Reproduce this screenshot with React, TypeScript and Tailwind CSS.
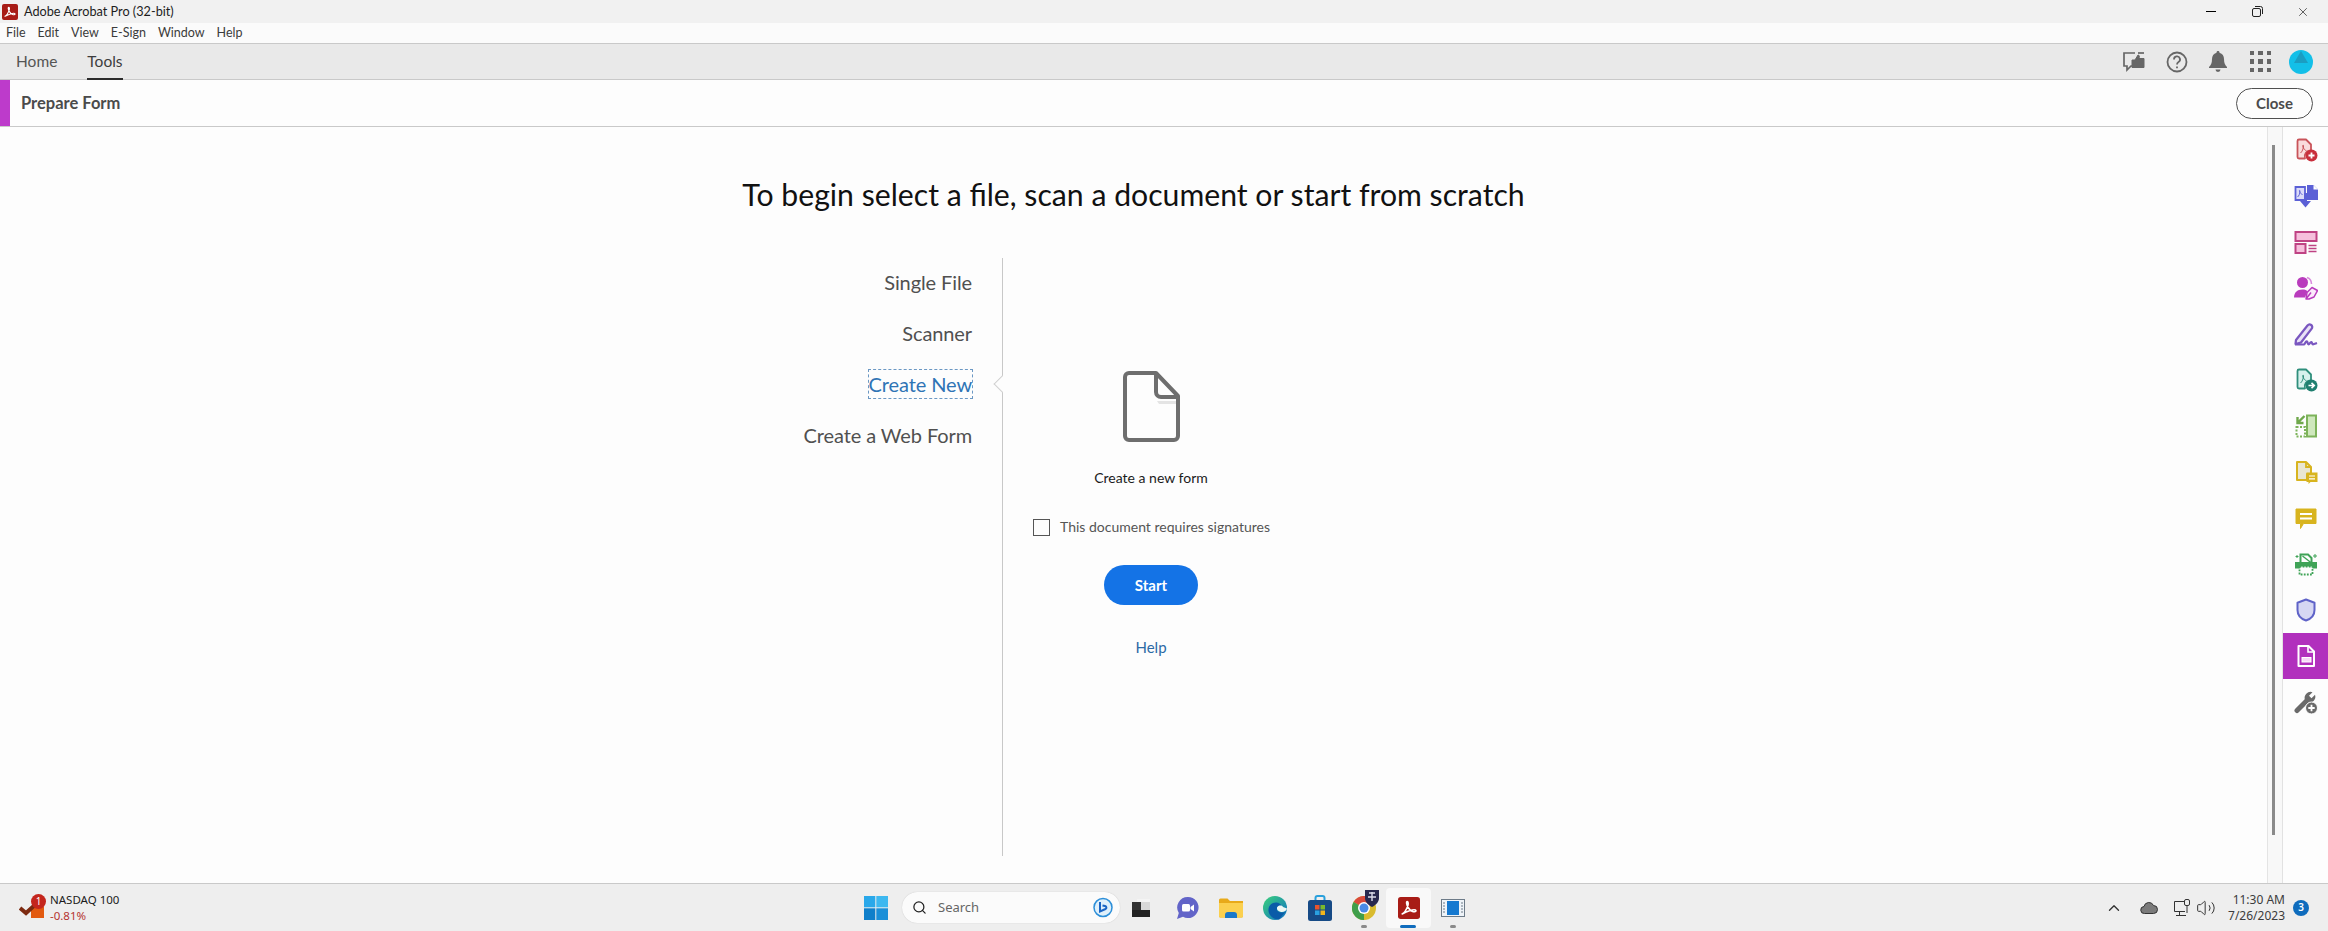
import { ChevronUp, Search, Volume2, X } from "lucide-react";
import type { ReactNode } from "react";

function AcrobatGlyph({ size = 16, radius = 3 }: { size?: number; radius?: number }) {
  return (
    <svg width={size} height={size} viewBox="0 0 24 24">
      <rect width="24" height="24" rx={radius} fill="#a81c16" />
      <path
        d="M4.500 18.500c2.500-1.200 5-5.500 6.400-9.600.5-1.600.3-4-.8-4-1.200 0-1 3.200 1 6.500 1.500 2.500 3.500 4.500 5.500 4.700 1.800.2 3.300-.4 3-1.300-.4-1-3.600-.9-7 .1-3.200.9-6.500 2.700-8.100 3.600z"
        fill="none"
        stroke="#fff"
        strokeWidth="1.700"
        strokeLinejoin="round"
      />
    </svg>
  );
}

function MiniPdf({ color, fill }: { color: string; fill: string }) {
  return (
    <>
      <path d="M5 1.500h7l5 5v6a6 6 0 0 0-6 8H5A1.500 1.500 0 0 1 3.500 19V3A1.500 1.500 0 0 1 5 1.500z" fill={fill} stroke={color} strokeWidth="1.800" strokeLinejoin="round" />
      <path d="M6.500 15c1.500-1 3-4.500 3-7 0-1.500-1.200-1-.6.800.6 1.800 2 3.500 3.600 4" fill="none" stroke={color} strokeWidth="1" />
    </>
  );
}

const railIcons: { key: string; active?: boolean; svg: ReactNode }[] = [
  {
    key: "create",
    svg: (
      <>
        <MiniPdf color="#c9545a" fill="#f9dcdc" />
        <circle cx="17.500" cy="17.500" r="6" fill="#c92f3c" />
        <path d="M17.500 14.500v6M14.500 17.500h6" stroke="#fff" strokeWidth="1.800" />
      </>
    ),
  },
  {
    key: "combine",
    svg: (
      <>
        <path d="M1.500 3h9.500v13H1.500z" fill="#dcdcf8" stroke="#5b60d6" strokeWidth="1.800" />
        <path d="M13 1h6.500L24 5.500V16H13z" fill="#5b60d6" />
        <path d="M19.500 1v4.500H24z" fill="#fdfdfd" />
        <path d="M3.500 13c1.500-1 2.500-3.500 2.500-6 0-1-1-.8-.5.500s1.500 2.500 3 3" fill="none" stroke="#5b60d6" strokeWidth="1" />
        <path d="M11.500 9v9" stroke="#5b60d6" strokeWidth="3" />
        <path d="M6 17h11l-5.500 6.500z" fill="#5b60d6" />
      </>
    ),
  },
  {
    key: "organize",
    svg: (
      <>
        <rect x="1.500" y="2" width="21" height="9" fill="#f6bfdc" stroke="#bf4384" strokeWidth="2" />
        <rect x="1.500" y="14" width="10" height="9" fill="#f6bfdc" stroke="#bf4384" strokeWidth="2" />
        <path d="M14.500 15.500h8M14.500 18.500h8M14.500 21.500h8" stroke="#bf4384" strokeWidth="1.400" />
      </>
    ),
  },
  {
    key: "sign-request",
    svg: (
      <>
        <circle cx="8.500" cy="6.500" r="5.500" fill="#b93cbd" />
        <path d="M0 21.500c0-5 3-8 8.500-8 2.500 0 4 .7 5 1.700L11 21.500z" fill="#b93cbd" />
        <path d="M13 1.500c3 1 4.500 3 4.500 6.500" fill="none" stroke="#d98adc" strokeWidth="1.600" />
        <path d="M12 23l1-6.500 5-5 5.500 3-3.500 6.500-5 2zM12 23l5-6.500" fill="#fbeafb" stroke="#b93cbd" strokeWidth="1.500" strokeLinejoin="round" />
      </>
    ),
  },
  {
    key: "fill-sign",
    svg: (
      <>
        <path d="M2 18L13.500 3.500c1-1.200 2.500-1.400 3.700-.5s1.400 2.500.5 3.700L7 20.500l-5.500 1.500z" fill="#e9e1f7" stroke="#7a57c0" strokeWidth="2.200" strokeLinejoin="round" />
        <path d="M1 22.500h9c1-.2 1.500-3.500 2.800-3.200 1.200.3.500 3 1.800 3 1.200 0 1.500-2.500 2.700-2.300 1 .2.500 2.300 1.700 2.300 1.500 0 2.500-.8 4-1.300" fill="none" stroke="#7a57c0" strokeWidth="2.200" />
      </>
    ),
  },
  {
    key: "export",
    svg: (
      <>
        <MiniPdf color="#2f8f7c" fill="#d6f1ec" />
        <circle cx="17.500" cy="17.500" r="6" fill="#1f7f6f" />
        <path d="M14.500 17.500h5.500M17.500 14.800l2.800 2.700-2.800 2.700" stroke="#fff" strokeWidth="1.600" fill="none" />
      </>
    ),
  },
  {
    key: "compress",
    svg: (
      <>
        <rect x="13" y="1.500" width="9" height="21" fill="#cfe8bd" stroke="#7db35a" strokeWidth="2" />
        <rect x="2.500" y="13" width="8.500" height="9.500" fill="none" stroke="#7db35a" strokeWidth="2" strokeDasharray="2 1.500" />
        <path d="M10.500 2L4.500 8M3.500 3v6h6" fill="none" stroke="#6fa84c" strokeWidth="2.400" />
      </>
    ),
  },
  {
    key: "edit-comment",
    svg: (
      <>
        <path d="M3 2h9l5 5v7h-4v6H3z" fill="#e9e6d2" stroke="#d8b41f" strokeWidth="2" strokeLinejoin="round" />
        <path d="M12 2v5h5" fill="none" stroke="#d8b41f" strokeWidth="1.800" />
        <path d="M12.500 12.500h11v9.500h-7l-2 2v-2h-2z" fill="#d8b41f" />
        <path d="M15 16h6M15 18.800h6" stroke="#fff" strokeWidth="1.200" />
      </>
    ),
  },
  {
    key: "comment",
    svg: (
      <>
        <path d="M2 3h20v14.500H9.500L6.500 22.500v-5H2z" fill="#d8b41f" stroke="#d8b41f" strokeWidth="1" strokeLinejoin="round" />
        <path d="M6 8h12M6 12.500h12" stroke="#fff" strokeWidth="2" />
      </>
    ),
  },
  {
    key: "scan",
    svg: (
      <>
        <path d="M6.500 11V2.500H14L17.500 6v5" fill="#fdfdfd" stroke="#3fa357" strokeWidth="2" />
        <path d="M8.500 4l9 7" stroke="#3fa357" strokeWidth="1.400" />
        <path d="M1 10h22v6.500H1z" fill="#3fa357" />
        <rect x="5.500" y="14.500" width="13" height="8" fill="#fdfdfd" stroke="#3fa357" strokeWidth="1.800" strokeDasharray="1.800 1.300" />
        <path d="M21 2v4M19 4h4M3 3v3M1.500 4.500h3" stroke="#3fa357" strokeWidth="1" />
      </>
    ),
  },
  {
    key: "protect",
    svg: (
      <path d="M12 1.500l8.500 3.200V12c0 5.500-3.300 8.800-8.500 10.500C6.800 20.800 3.500 17.500 3.500 12V4.700z" fill="#d6d7f3" stroke="#5f63c8" strokeWidth="2" strokeLinejoin="round" />
    ),
  },
  {
    key: "form",
    active: true,
    svg: (
      <>
        <path d="M4.500 2h10L20 7.500V22H4.500z" fill="none" stroke="#fff" strokeWidth="2" strokeLinejoin="round" />
        <path d="M14 2.500V8h5.500" fill="none" stroke="#fff" strokeWidth="1.600" />
        <rect x="8" y="13.500" width="9" height="4.500" fill="#f7d9f8" stroke="#fff" strokeWidth="1" />
      </>
    ),
  },
  {
    key: "more",
    svg: (
      <>
        <path d="M3 20.500L13 10.500" stroke="#6a6a6a" strokeWidth="5" strokeLinecap="round" />
        <path d="M11 10a6 6 0 0 1 7.500-7.800l-3.500 3.500 2.500 2.500 3.500-3.500A6 6 0 0 1 14 12.500z" fill="#6a6a6a" />
        <circle cx="17.500" cy="18" r="6" fill="#6a6a6a" stroke="#fdfdfd" strokeWidth="1" />
        <path d="M17.500 14.800v6.400M14.300 18h6.400" stroke="#fff" strokeWidth="1.800" />
      </>
    ),
  },
];

function Rail() {
  return (
    <aside className="flex w-[46px] flex-col border-l border-[#e2e2e2]">
      {railIcons.map((icon) => (
        <div
          key={icon.key}
          className={icon.active ? "flex h-[46px] items-center justify-center bg-[#b130bd]" : "flex h-[46px] items-center justify-center"}
        >
          <svg width="24" height="24" viewBox="0 0 24 24">
            {icon.svg}
          </svg>
        </div>
      ))}
    </aside>
  );
}

function TopBar() {
  return (
    <>
      <div className="flex h-[23px] items-center bg-[#f1f1f1] pl-[2px] text-[12.700px] text-[#1d1d1d]">
        <AcrobatGlyph />
        <span className="ml-[6px]">Adobe Acrobat Pro (32-bit)</span>
        <div className="ml-auto flex h-full items-center pr-[2px]">
          <div className="flex w-[46px] justify-center">
            <span className="h-px w-[10px] bg-black" />
          </div>
          <div className="flex w-[46px] justify-center">
            <svg width="11" height="11" viewBox="0 0 11 11" fill="none" stroke="#222">
              <rect x=".5" y="2.500" width="8" height="8" rx="1.500" />
              <path d="M3 .5h5.500a2 2 0 0 1 2 2V8" />
            </svg>
          </div>
          <div className="flex w-[46px] justify-center">
            <X size={14} strokeWidth={1.200} color="#222" />
          </div>
        </div>
      </div>
      <div className="flex h-[21px] items-center gap-[12px] border-b border-[#c9c9c9] bg-[#fbfbfb] pl-[6px] text-[12.500px] text-[#3c3c3c]">
        <span>File</span>
        <span>Edit</span>
        <span>View</span>
        <span>E-Sign</span>
        <span>Window</span>
        <span>Help</span>
      </div>
      <div className="flex h-[36px] items-center border-b border-[#c9c9c9] bg-[#e9e9e9] pl-[16px] text-[#555]">
        <span className="text-[15.500px]">Home</span>
        <span className="relative ml-[30px] text-[15.500px] text-[#3c3c3c]">
          Tools
          <span className="absolute -bottom-[7px] left-0 h-[2px] w-full bg-[#2c2c2c]" />
        </span>
        <div className="ml-auto flex items-center pr-[15px]">
          <svg width="24" height="22" viewBox="0 0 24 22" fill="none" stroke="#666" strokeWidth="1.700">
            <path d="M13 2H2v13h3v4l4-4h3" />
            <path d="M10 9h3l3-5c1.500 0 1.500 1.500 1 3.500h5v9H10z" fill="#666" stroke="#666" strokeWidth="1" />
            <path d="M16 2h6" />
          </svg>
          <svg className="ml-[20px]" width="22" height="22" viewBox="0 0 22 22" fill="none" stroke="#666" strokeWidth="1.800">
            <circle cx="11" cy="11" r="9.500" />
            <path d="M8 8.500a3 3 0 1 1 4.500 2.500c-1 .6-1.500 1.200-1.500 2.500" />
            <path d="M11 15.500v1.800" />
          </svg>
          <svg className="ml-[21px]" width="18" height="21" viewBox="0 0 18 21" fill="#666">
            <path d="M9 0c1 0 1.500.7 1.500 1.700C13.500 2.500 15 5 15 8c0 4 1 6 3 8v1H0v-1c2-2 3-4 3-8 0-3 1.500-5.500 4.500-6.300C7.500.7 8 0 9 0z" />
            <path d="M6.500 18.500h5a2.500 2.500 0 0 1-5 0z" />
          </svg>
          <div className="ml-[23px] grid grid-cols-3 gap-[4px]">
            {Array.from({ length: 9 }).map((_, i) => (
              <span key={i} className="size-[4.500px] bg-[#666]" />
            ))}
          </div>
          <div className="relative ml-[18px] size-[24px] overflow-hidden rounded-full bg-[#13bfe8]">
            <span className="absolute left-[5px] top-[1px] size-0 border-x-[7px] border-b-[12px] border-x-transparent border-b-[#1b9dc2]" />
          </div>
        </div>
      </div>
      <div className="flex h-[47px] items-center border-b border-[#c9c9c9] bg-[#fdfdfd]">
        <span className="h-full w-[10px] bg-[#bd3bcb]" />
        <span className="ml-[11px] text-[16.500px] font-bold text-[#4b4b4b]">Prepare Form</span>
        <button className="ml-auto mr-[15px] h-[31px] w-[77px] rounded-full border border-[#505050] text-[15px] font-bold text-[#4b4b4b]">
          Close
        </button>
      </div>
    </>
  );
}

function NewForm() {
  return (
    <div className="flex w-[296px] flex-col items-center pt-[113px]">
      <svg width="57" height="71" viewBox="0 0 57 71" fill="none" stroke="#6e6e6e" strokeWidth="4">
        <path d="M34 30h20v3H36z" fill="#e4e4e4" stroke="none" />
        <path d="M6 2h27l22 23v40a4 4 0 0 1-4 4H6a4 4 0 0 1-4-4V6a4 4 0 0 1 4-4z" strokeLinejoin="round" />
        <path d="M33 2v19a5 5 0 0 0 5 5h17" />
      </svg>
      <div className="mt-[26px] text-[14px] leading-[20px] text-[#1b1b1b]">Create a new form</div>
      <label className="mt-[29px] flex items-center self-start pl-[30px] text-[14px] leading-[20px] text-[#555]">
        <span className="size-[17px] border border-[#555]" />
        <span className="ml-[10px]">This document requires signatures</span>
      </label>
      <button className="mt-[28px] h-[40px] w-[94px] rounded-full bg-[#1473e6] text-[15px] font-bold text-white">Start</button>
      <a className="mt-[32px] text-[15px] leading-[20px] text-[#2c6aa5]">Help</a>
    </div>
  );
}

function Body() {
  return (
    <section className="flex min-w-0 flex-1 flex-col">
      <h1 className="mt-[47px] text-center text-[30.200px] leading-[40px] text-[#111]">
        To begin select a file, scan a document or start from scratch
      </h1>
      <div className="mt-[44px] flex h-[598px]">
        <nav className="ml-[700px] flex w-[272px] flex-col items-end pt-[10px] text-[20px] leading-[28px] tracking-[-0.1px] text-[#505050]">
          <span>Single File</span>
          <span className="mt-[23px]">Scanner</span>
          <span className="mt-[23px] text-[#2f74b5] outline-1 outline-dashed outline-[#6b98c4]">Create New</span>
          <span className="mt-[23px]">Create a Web Form</span>
        </nav>
        <div className="relative ml-[30px] w-px bg-[#c8c8c8]">
          <span className="absolute left-[-6px] top-[120px] size-[12px] rotate-45 border-b border-l border-[#d0d0d0] bg-[#fdfdfd]" />
        </div>
        <NewForm />
      </div>
    </section>
  );
}

function TaskIcon({ children, active, dot }: { children: ReactNode; active?: boolean; dot?: boolean }) {
  return (
    <div className={active ? "relative flex h-[40px] w-[44.400px] items-center justify-center rounded-[4px] bg-[#f9f9f9]" : "relative flex h-[40px] w-[44.400px] items-center justify-center"}>
      {children}
      {active && <span className="absolute bottom-0 left-[14px] h-[3px] w-[16px] rounded-full bg-[#0f6cbd]" />}
      {dot && <span className="absolute bottom-0 left-[19px] h-[3px] w-[6px] rounded-full bg-[#8a8a8a]" />}
    </div>
  );
}

function Taskbar() {
  return (
    <footer className="relative flex h-[48px] items-center justify-between border-t border-[#c9c9c9] bg-[#eeeeee] font-['Noto_Sans',sans-serif]">
      <div className="flex items-center pl-[19px]">
        <div className="relative h-[24px] w-[30px]">
          <svg width="30" height="24" viewBox="0 0 30 24">
            <rect x="12" y="11" width="13" height="11" fill="#e25a10" />
            <path d="M1 12l6 5 10-9" fill="none" stroke="#7c2a10" strokeWidth="4" />
          </svg>
          <span className="absolute left-[12px] top-[-2px] flex size-[15px] items-center justify-center rounded-full bg-[#c4261d] text-[10px] text-white">1</span>
        </div>
        <div className="ml-[1px] flex flex-col text-[11.500px] leading-[16px]">
          <span className="text-[#1c1c1c]">NASDAQ 100</span>
          <span className="text-[#b5332e]">-0.81%</span>
        </div>
      </div>

      <div className="absolute left-[864px] flex items-center">
        <svg width="24" height="24" viewBox="0 0 24 24">
          <rect width="11.300" height="11.300" fill="#29a8ea" />
          <rect x="12.300" width="11.700" height="11.300" fill="#3db8f0" />
          <rect y="12.300" width="11.300" height="11.700" fill="#0f7fca" />
          <rect x="12.300" y="12.300" width="11.700" height="11.700" fill="#1a8fd8" />
        </svg>
        <div className="ml-[14px] flex h-[31px] w-[218px] items-center rounded-full bg-[#fbfbfb] pl-[10px] pr-[6px] text-[13px] text-[#666] shadow-[0_0_1px_#bbb]">
          <Search size={15} strokeWidth={2} color="#222" />
          <span className="ml-[11px]">Search</span>
          <svg className="ml-auto" width="22" height="22" viewBox="0 0 22 22">
            <circle cx="11" cy="10.500" r="9" fill="#dff0fb" stroke="#2c8fd9" strokeWidth="1.500" />
            <path d="M8 5v9.500l5.500-2.500c1.500-.8 1-2.500-.5-3L10.500 8.500" fill="none" stroke="#1a64c4" strokeWidth="2" />
          </svg>
        </div>
        <div className="flex items-center">
          <TaskIcon>
            <svg width="20" height="18" viewBox="0 0 20 18">
              <rect x="5" y="0" width="13" height="11" fill="#f4f4f4" />
              <rect x="0" y="3" width="18" height="15" fill="#d8d8d8" />
              <rect x="0" y="11" width="18" height="7" fill="#222" />
              <rect x="0" y="3" width="9" height="8" fill="#333" />
            </svg>
          </TaskIcon>
          <TaskIcon>
            <svg width="24" height="24" viewBox="0 0 24 24">
              <path d="M13 1a10.500 10.500 0 1 1-5 19.700L2 23l1.800-6A10.500 10.500 0 0 1 13 1z" fill="#6264c8" />
              <rect x="7" y="8" width="8" height="7.500" rx="1.500" fill="#fff" />
              <path d="M15.500 11l3.500-2.500v7L15.500 13z" fill="#fff" />
            </svg>
          </TaskIcon>
          <TaskIcon>
            <svg width="24" height="20" viewBox="0 0 24 20">
              <path d="M0 2a1.500 1.500 0 0 1 1.500-1.500h7L11 3h13v15a1.500 1.500 0 0 1-1.500 1.500h-21A1.500 1.500 0 0 1 0 18z" fill="#e8aa1a" />
              <path d="M0 5h24v13a1.500 1.500 0 0 1-1.500 1.500h-21A1.500 1.500 0 0 1 0 18z" fill="#fbd04f" />
              <path d="M6 20v-3a3 3 0 0 1 3-3h6a3 3 0 0 1 3 3v3z" fill="#1a78c9" />
            </svg>
          </TaskIcon>
          <TaskIcon>
            <svg width="24" height="24" viewBox="0 0 24 24">
              <defs>
                <linearGradient id="edgeFill" x1="0" y1="0" x2="1" y2="1">
                  <stop offset="0" stopColor="#3bd27a" />
                  <stop offset="1" stopColor="#0f6fc6" />
                </linearGradient>
              </defs>
              <circle cx="12" cy="12" r="12" fill="url(#edgeFill)" />
              <path d="M24 14c-1 2-4 3-6.500 2.500-2.500-.4-4-2-3.500-4s3.500-3 5-1.500C18 7 14 5.500 10 7c-4 1.800-5.500 6-4 10s6 6.500 10 6.500" fill="#0a5ba8" />
              <path d="M24 12.500c-.5 2.500-3.500 4-6 3.500-3-.6-4.500-2.500-4-4.500 1-3 6-2.500 6-.5" fill="#eef8f4" />
            </svg>
          </TaskIcon>
          <TaskIcon>
            <svg width="24" height="26" viewBox="0 0 24 26">
              <path d="M7.500 6V3a2 2 0 0 1 2-2h5a2 2 0 0 1 2 2v3" fill="none" stroke="#29a0dc" strokeWidth="2" />
              <rect y="5" width="24" height="21" rx="2.500" fill="#164a86" />
              <rect x="7" y="10" width="4.500" height="4.500" fill="#e8542c" />
              <rect x="12.500" y="10" width="4.500" height="4.500" fill="#7ab82b" />
              <rect x="7" y="15.500" width="4.500" height="4.500" fill="#2aa0e0" />
              <rect x="12.500" y="15.500" width="4.500" height="4.500" fill="#f2b51c" />
            </svg>
          </TaskIcon>
          <TaskIcon dot>
            <div className="relative">
              <svg width="24" height="24" viewBox="0 0 24 24">
                <circle cx="12" cy="12" r="12" fill="#d9bb2f" />
                <path d="M12 12L1.600 6A12 12 0 0 1 22.400 6z" fill="#d94a3b" />
                <path d="M12 12L1.600 6A12 12 0 0 0 12 24z" fill="#3f9e4a" />
                <circle cx="12" cy="12" r="6" fill="#fff" />
                <circle cx="12" cy="12" r="4.500" fill="#4a8ae6" />
              </svg>
              <svg className="absolute left-[12px] top-[-7px]" width="16" height="18" viewBox="0 0 16 18">
                <path d="M1 1h14v8c0 4-3 7-7 9-4-2-7-5-7-9z" fill="#28284e" />
                <path d="M5 4h6M8 3v9M4 8h8" stroke="#dcdcea" strokeWidth="1.400" />
              </svg>
            </div>
          </TaskIcon>
          <TaskIcon active>
            <AcrobatGlyph size={22} radius={3} />
          </TaskIcon>
          <TaskIcon dot>
            <svg width="24" height="18" viewBox="0 0 24 18">
              <rect x=".5" y=".5" width="23" height="17" fill="#eef3f8" stroke="#6d7b88" />
              <rect x="6" y="2" width="12" height="14" fill="#1579d0" />
              <path d="M2 4h2M2 7h2M2 10h2M2 13h2M20 4h2M20 7h2M20 10h2M20 13h2" stroke="#6d7b88" />
            </svg>
          </TaskIcon>
        </div>
      </div>

      <div className="flex items-center pr-[19px] text-[#3c3c3c]">
        <ChevronUp size={18} strokeWidth={1.800} color="#333" />
        <svg className="ml-[17px]" width="18" height="14" viewBox="0 0 18 14">
          <path d="M4.500 12.500a3.500 3.500 0 0 1-.5-7 5 5 0 0 1 9.500-1 4 4 0 0 1 0 8z" fill="#7a7a7a" stroke="#333" strokeWidth="1" />
        </svg>
        <svg className="ml-[15px]" width="18" height="18" viewBox="0 0 18 18" fill="none" stroke="#333" strokeWidth="1">
          <path d="M12 2.500H1.500v10H12M6.500 12.500V16M3 16.500h10" />
          <rect x="11.500" y=".5" width="5" height="6" rx="1.500" />
          <path d="M14 6.500V14" />
        </svg>
        <Volume2 className="ml-[5px]" size={20} strokeWidth={1.200} color="#333" />
        <div className="ml-[12px] flex flex-col items-end text-[12px] leading-[16px]">
          <span>11:30 AM</span>
          <span>7/26/2023</span>
        </div>
        <span className="ml-[8px] flex size-[16px] items-center justify-center rounded-full bg-[#0f6cbd] text-[10px] font-semibold text-white">3</span>
      </div>
    </footer>
  );
}

export default function App() {
  return (
    <div className="flex h-[931px] w-[2328px] flex-col overflow-hidden bg-[#fdfdfd] font-['Lato','Noto_Sans',sans-serif]">
      <TopBar />
      <main className="flex min-h-0 flex-1">
        <Body />
        <div className="flex w-[15px] justify-start border-l border-[#e4e4e4] bg-[#f8f8f8] pl-[4px] pt-[18px]">
          <span className="h-[690px] w-[3px] bg-[#8a8a8a]" />
        </div>
        <Rail />
      </main>
      <Taskbar />
    </div>
  );
}
